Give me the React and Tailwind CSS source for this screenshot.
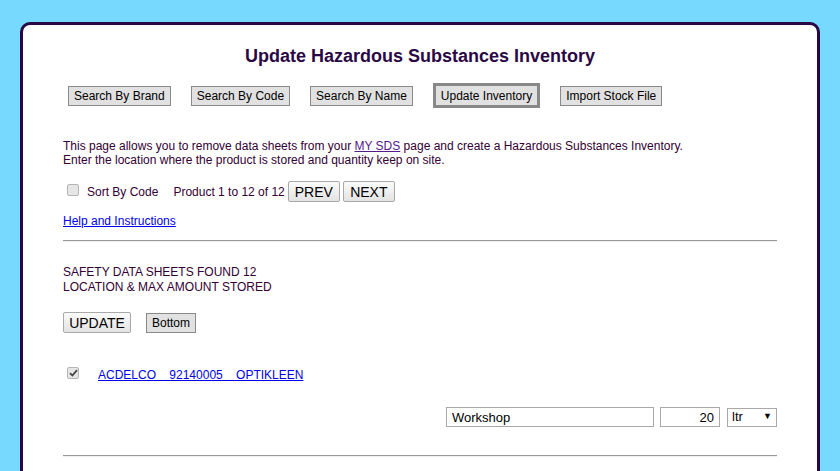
import React from "react";

const font = { fontFamily: '"Liberation Sans", Arial, sans-serif' };

function GrayBtn({ children, active }) {
  return (
    <button
      className={
        active
          ? "h-[25px] px-[5px] border-[3px] border-[#888888] bg-[#e1e1e1] text-[12px] text-black leading-none"
          : "h-[20px] px-[5px] border border-[#8a8a8a] bg-[#e1e1e1] text-[12px] text-black leading-none"
      }
    >
      {children}
    </button>
  );
}

function LightBtn({ children, className = "" }) {
  return (
    <button
      className={
        "h-[21px] border border-[#a9a9a9] rounded-[2px] bg-gradient-to-b from-[#fbfbfb] to-[#e3e3e3] text-[14px] text-black leading-none " +
        className
      }
    >
      {children}
    </button>
  );
}

function Check({ checked }) {
  return (
    <span className="inline-flex w-[12px] h-[12px] items-center justify-center border border-[#b5b5b5] rounded-[2px] bg-[#e6e6e6] shrink-0">
      {checked && (
        <svg width="9" height="8" viewBox="0 0 9 8">
          <path d="M1 4.2 L3.4 6.5 L8 1.2" fill="none" stroke="#444" strokeWidth="1.8" />
        </svg>
      )}
    </span>
  );
}

export default function App() {
  return (
    <div className="min-h-[471px] w-[840px] bg-[#77d9fd] pt-[22px] pl-[20px]" style={font}>
      <div className="w-[800px] min-h-[460px] bg-white border-[3px] border-[#2a0845] rounded-[10px] px-[40px] pt-[21px] text-[#330033]">
        <h1 className="text-center text-[18px] leading-[21px] font-bold text-[#2a0845]">
          Update Hazardous Substances Inventory
        </h1>

        <div className="mt-[16px] ml-[5px] flex items-center gap-[20px]">
          <GrayBtn>Search By Brand</GrayBtn>
          <GrayBtn>Search By Code</GrayBtn>
          <GrayBtn>Search By Name</GrayBtn>
          <GrayBtn active>Update Inventory</GrayBtn>
          <GrayBtn>Import Stock File</GrayBtn>
        </div>

        <p className="mt-[31px] text-[12px] leading-[14px]">
          This page allows you to remove data sheets from your{" "}
          <a className="underline text-[#551a8b]" href="#">MY SDS</a> page and create a Hazardous Substances Inventory.
          <br />
          Enter the location where the product is stored and quantity keep on site.
        </p>

        <div className="mt-[14px] flex items-center text-[12px]">
          <span className="ml-[4px]">
            <Check />
          </span>
          <span className="ml-[8px]">Sort By Code</span>
          <span className="ml-[15px]">Product 1 to 12 of 12</span>
          <LightBtn className="ml-[3px] w-[52px]">PREV</LightBtn>
          <LightBtn className="ml-[3px] w-[52px]">NEXT</LightBtn>
        </div>

        <div className="mt-[12px] text-[12px] leading-[14px]">
          <a className="underline text-[#0000ee]" href="#">Help and Instructions</a>
        </div>

        <div className="mt-[12px] h-[2px] border-t border-[#9a9a9a] border-b border-b-[#eeeeee]" />

        <div className="mt-[23px] text-[12px] leading-[15px]">
          SAFETY DATA SHEETS FOUND 12
          <br />
          LOCATION &amp; MAX AMOUNT STORED
        </div>

        <div className="mt-[17px] flex items-center gap-[15px]">
          <LightBtn className="w-[68px]">UPDATE</LightBtn>
          <GrayBtn>Bottom</GrayBtn>
        </div>

        <div className="mt-[35px] flex items-start">
          <span className="ml-[4px] -mt-[1px] flex">
            <Check checked />
          </span>
          <a className="ml-[19px] underline text-[#0000ee] text-[12px] leading-[14px] whitespace-pre" href="#">
            {"ACDELCO    92140005    OPTIKLEEN"}
          </a>
        </div>

        <div className="mt-[25px] flex items-center justify-end">
          <input
            readOnly
            value="Workshop"
            className="w-[208px] h-[20px] border border-[#a9a9a9] px-[5px] text-[13px] text-black outline-none"
          />
          <input
            readOnly
            value="20"
            className="ml-[6px] w-[60px] h-[20px] border border-[#a9a9a9] px-[5px] text-right text-[13px] text-black outline-none"
          />
          <div className="ml-[7px] w-[50px] h-[19px] border border-[#a9a9a9] flex items-center justify-between px-[4px] text-[13px] text-black">
            <span>ltr</span>
            <span className="text-[9px]">▼</span>
          </div>
        </div>

        <div className="mt-[28px] h-[2px] border-t border-[#9a9a9a] border-b border-b-[#eeeeee]" />
      </div>
    </div>
  );
}
